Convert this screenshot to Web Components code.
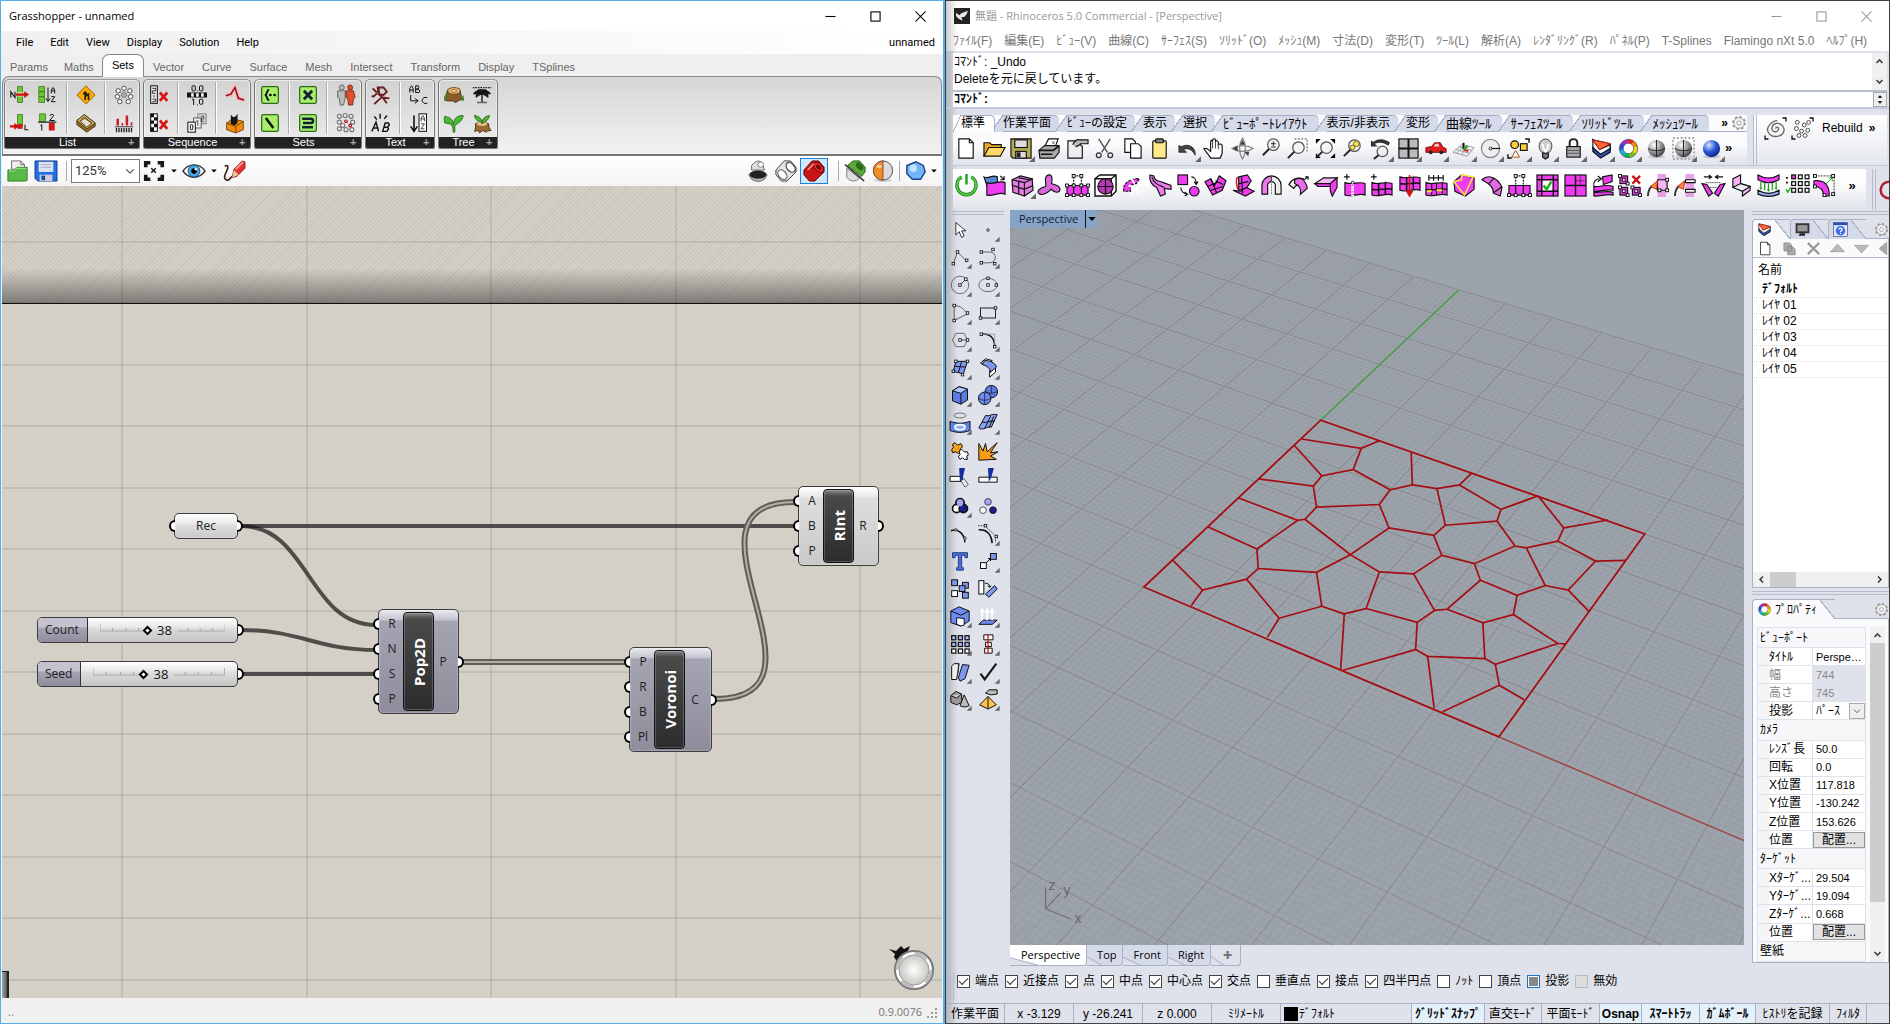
<!DOCTYPE html>
<html lang="ja">
<head>
<meta charset="utf-8">
<title>Grasshopper + Rhinoceros</title>
<style>
html,body{margin:0;height:100%}
body{font:12px/16px "Liberation Sans","Noto Sans CJK JP",sans-serif;color:#000;background:#333;overflow:hidden}
</style>
</head>
<body>
<work-desk></work-desk>
<script>
/* ---------- icon library, every icon lives in a 24 x 24 box ---------- */
const K='stroke="#111" stroke-width="1.2" ';
const N='fill="none" ';
const pk='fill="#f03cf0" '+K, lp='fill="#f9b4f6" '+K, bl='fill="#7f97ee" '+K;
const sq=(x,y,f='#fff')=>`<rect x="${x-1.5}" y="${y-1.5}" width="3" height="3" fill="${f}" stroke="#111"/>`;
const sqs=(...a)=>a.map(p=>sq(p[0],p[1])).join('');
const dot=(x,y)=>`<circle cx="${x}" cy="${y}" r="1.5" fill="#fff" stroke="#111"/>`;
const redX='<path d="M13 9l9 10M22 9l-9 10" stroke="#d81414" stroke-width="3.2"/>';
const setBox='<rect x="2" y="2" width="20" height="20" rx="2" fill="#a8ee6c" stroke="#2f6a14" stroke-width="1.5"/>';
const sphere=(id,a,b,c)=>`<defs><radialGradient id="${id}" cx=".35" cy=".3" r=".8"><stop offset="0" stop-color="${a}"/><stop offset=".5" stop-color="${b}"/><stop offset="1" stop-color="${c}"/></radialGradient></defs><ellipse cx="12" cy="20.5" rx="9" ry="2" fill="#0002"/><circle cx="12" cy="12" r="9" fill="url(#${id})"/>`;
const wheel=['#e22','#f80','#fd0','#7c0','#0b6','#0bd','#24e','#a2d'].map((c,i)=>`<circle cx="12" cy="12" r="7.5" fill="none" stroke="${c}" stroke-width="4" stroke-dasharray="6.2 41" transform="rotate(${i*45-100} 12 12)"/>`).join('')+`<circle cx="12" cy="12" r="9.5" ${N} stroke="#444" stroke-width=".8"/><circle cx="12" cy="12" r="5.5" fill="#fff" stroke="#444" stroke-width=".8"/>`;
const mag=(x,y)=>`<path d="M${x-4} ${y+4}l-7 7" stroke="#222" stroke-width="2"/><circle cx="${x}" cy="${y}" r="6" fill="#f4f4f4" stroke="#555" stroke-width="1.3"/>`;
const ribbonIcons={
 l1:`<rect x="9" y="2" width="6" height="19" fill="#6cc832" stroke="#2d6a10" stroke-width=".8"/><path d="M9 8h6v6H9z" fill="#b8e88c"/><path d="M1 15V8l5 7V8" ${N} stroke="#111" stroke-width="1.3"/><path d="M7 11.5h11" stroke="#d01010" stroke-width="2.5"/><path d="M17 7.5l6 4-6 4z" fill="#d01010"/>`,
 l2:`<rect x="1" y="2" width="7" height="19" fill="#6cc832" stroke="#2d6a10" stroke-width=".8"/><path d="M1 8h7M1 14h7" stroke="#2d6a10"/><path d="M12 3v16m-2.5-3l2.5 4 2.5-4" ${N} ${K}/><path d="M16 10V6l2-3 2 3v4m-4-3h4M16 14h4l-4 6h5" ${N} ${K}/>`,
 l3:`<path d="M12 1L23 12 12 23 1 12z" fill="#ffa800" stroke="#8a5800"/><path d="M11 18V8m0 6l4-3v7M11 8l-2 3m2-3l2 3" ${N} stroke="#222" stroke-width="2"/>`,
 l4:['12 4','5 7','19 7','4 14','20 14','7 20','17 20'].map(p=>{const [x,y]=p.split(' ');return `<path d="M12 12L${x} ${y}" stroke="#999"/><circle cx="${x}" cy="${y}" r="2.6" fill="#fff" stroke="#333"/>`}).join('')+'<circle cx="12" cy="12" r="3" fill="#aaa" stroke="#777"/>',
 l5:`<rect x="9" y="2" width="6" height="15" fill="#6cc832" stroke="#2d6a10" stroke-width=".8"/><rect x="9" y="13" width="6" height="6" fill="#d01818"/><path d="M0 16h6" stroke="#d01010" stroke-width="2.5"/><path d="M5 12l6 4-6 4z" fill="#d01010"/><path d="M18 14v6h4" ${N} stroke="#111" stroke-width="1.3"/>`,
 l6:`<rect x="2" y="1" width="7" height="9" fill="#6cc832" stroke="#2d6a10" stroke-width=".8"/><path d="M0 11h22" stroke="#222" stroke-width="1.5"/><rect x="13" y="12" width="7" height="9" fill="#d01818"/><path d="M3 15l1.5-1v7M14 3l3-1.5 2 1.5-5 6h6" ${N} ${K}/>`,
 l7:`<path d="M1 9l9-7 13 10v4l-10 7L1 14z" fill="#8a6a28" stroke="#40300c"/><path d="M1 9l9-7 13 10-10 7z" fill="#d6b464" stroke="#40300c"/><path d="M5 10l5-5 9 7-6 5z" fill="#e4e0d0" stroke="#40300c"/><path d="M5 10l5-4 9 6" ${N} stroke="#776030" stroke-width="1.5"/>`,
 l8:`<path d="M3 15V7h3v8m3 0v-3h2v3m3 0V3h3v12m3 0v-4h2v4z" fill="#c81e2c"/><path d="M1 16.5h22" stroke="#222"/><path d="M3 18v5m3-5v5m3-5v5m3-5v5m3-5v5m3-5v5m3-5v5" stroke="#222" stroke-width="1.6"/>`,
 q1:`<rect x="2" y="1" width="8" height="21" fill="#eee" ${K}/><path d="M4 4h4v3H4v3h4M6 12v3M4 17h4v3H4" ${N} stroke="#111"/>${redX}`,
 q2:`<rect x="0" y="9" width="24" height="6" fill="#111"/><path d="M5 10h3v4H5zm6 0h3v4h-3zm6 0h3v4h-3z" fill="#fff"/><rect x="6" y="1" width="4" height="6" rx="1" ${N} ${K}/><path d="M12 7h1" ${K}/><rect x="15" y="1" width="4" height="6" rx="1" ${N} ${K}/><path d="M6 18l2-1v7m4 0h1" ${N} ${K}/><rect x="15" y="17" width="4" height="6" rx="1" ${N} ${K}/>`,
 q3:`<path d="M1 13l6-2 5-8 4 13 7 2" ${N} stroke="#ffb4b4" stroke-width="5"/><path d="M1 13l6-2 5-8 4 13 7 2" ${N} stroke="#8e1020" stroke-width="1.8"/>`,
 q4:`<rect x="2" y="1" width="8" height="21" fill="#fff" ${K}/><path d="M2 1h4v4H2zm4 4h4v4H6zM2 9h4v4H2zm4 4h4v4H6zm-4 4h4v5H2z" fill="#111"/>${redX}`,
 q5:`<rect x="13" y="1" width="10" height="12" fill="#ccc" stroke="#777"/><rect x="8" y="6" width="9" height="12" fill="#eee" stroke="#444"/><rect x="1" y="11" width="9" height="12" fill="#fff" ${K}/><rect x="4" y="14" width="3" height="6" rx="1" ${N} ${K}/><path d="M11 10l2-1v6M17 4h3v3h-3v3h3" ${N} stroke="#333"/>`,
 q6:`<path d="M2 12l7-5 13 3v10l-9 4-11-4z" fill="#f08a10" stroke="#6a3600"/><path d="M2 12l11 4 9-6M13 16v8" ${N} stroke="#6a3600"/><path d="M7 13V2l3 3 3-1 2-3v11l-4 3z" fill="#171717"/>`,
 s1:`${setBox}<path d="M11 6c-4 0-1 5-5 6 4 1 1 6 5 6" ${N} stroke="#111" stroke-width="2.2"/><circle cx="12.5" cy="12" r="1.6"/><circle cx="17.500" cy="12" r="1.6"/>`,
 s2:`${setBox}<path d="M7 7l10 10m0-10L7 17" stroke="#123" stroke-width="3.4"/>`,
 s3:`<g fill="#bbb" stroke="#555"><circle cx="7" cy="3" r="3"/><path d="M2 7h9v9l-2 8H5l-1-8-2-1z"/></g><g fill="#e0502c" stroke="#702010"><circle cx="17" cy="3" r="3"/><path d="M12 7h9l2 8-2 1-1 8h-5l-1-8-2-1z"/></g>`,
 s4:`${setBox}<path d="M7 6l9 12" stroke="#111" stroke-width="3"/>`,
 s5:`${setBox}<path d="M5 7h10c4 0 4 5 0 5H6m0 0h9m3 5H5" ${N} stroke="#123" stroke-width="3"/>`,
 s6:[[4,4,0],[11,3,0],[18,4,0],[4,11,0],[20,11,0],[4,19,0],[12,20,0],[19,20,0],[8,15,0],[12,10,1],[17,15,1]].map(p=>`<circle cx="${p[0]}" cy="${p[1]}" r="${p[2]?1.6:2.4}" fill="#eee" stroke="${p[2]?'#b01020':'#777'}" stroke-width="1.4"/>`).join(''),
 t1:`<path d="M8 3l7 0 4 5-4 4-6-1zM9 2l1 10M7 10l-4 4-2-1m7-3l6 5 8 1m-8-2l-6 5-4 4M14 15l5 7M2 4l5 5" ${N} stroke="#6a1c20" stroke-width="2.2"/>`,
 t2:`<path d="M1 9V4l2-3 2 3v5M1 6h4M8 9V1h3l1 2-1 2H8h3l2 2-1 2zM2 12v7h8m-3-3l4 3-4 3M22 15h-4l-2 2v3l2 2h4" ${N} ${K}/>`,
 t3:`<path d="M1 22l5-11 3 11M3 18h6M14 22l3-10h4l1 2-2 3h-4 4l1 2-2 3zM7 8L4 4m7 3V1m5 6l3-4" ${N} stroke="#111" stroke-width="1.7"/>`,
 t4:`<path d="M6 3v17m-4-4l4 6 4-6" ${N} stroke="#111" stroke-width="1.9"/><rect x="12" y="1" width="9" height="21" fill="#fff" ${K}/><path d="M14.500 10V6l2-3 2 3v4m-4-3h4M14.500 13h4l-4 6h4" ${N} stroke="#222"/>`,
 e1:`<path d="M1 18c3-5 1-9 4-13l13-1c3 4 1 9 5 14-6-1-5 2-10 3-3-4-6 0-12-3z" fill="#8a5a28" stroke="#3c2408"/><ellipse cx="12" cy="7" rx="7.5" ry="4" fill="#e6be84" stroke="#6a4214"/><ellipse cx="12" cy="7" rx="4" ry="2" ${N} stroke="#a87030"/><path d="M1 13v6m22-6v6M3 10l-1 3" stroke="#3a9a20" stroke-width="1.8"/>`,
 e2:`<path d="M1 3h22" stroke="#222" stroke-width="1.5" stroke-dasharray="2 1"/><path d="M12 21V11M12 12C8 5 4 7 2 11m10 0C9 8 5 10 5 15m7-4c3-6 8-4 10 0m-10 0c4-4 7-2 7 4M8 6h8l4 3H4z" fill="#222" stroke="#111" stroke-width="1.6"/><path d="M6 21h12" stroke="#666" stroke-width="2"/>`,
 e3:`<path d="M11 23c0-9-2-10-10-11C0 8 0 6 1 4c6 1 10 4 10 10 1-8 5-11 12-11-1 7-6 9-10 12v8z" fill="#4cb834" stroke="#1c6410"/>`,
 e4:`<path d="M4 13c2-2 14-2 16 0 0 4 1 6 3 8-4 0-5 1-6 2l-4-2-4 3-1-3-5 1c1-3 2-5 1-9z" fill="#9a6a34" stroke="#3c2408"/><ellipse cx="12" cy="13" rx="6" ry="2.5" fill="#e6be84"/><path d="M12 13C12 6 8 4 3 3c1 6 4 7 9 8 1-5 4-7 9-8-1 5-4 8-9 9z" fill="#4cb834" stroke="#1c6410"/>`
};
const barIcons={
 gopen:`<path d="M5 10V1h10l4 4v6z" fill="#eee" stroke="#666"/><path d="M15 1v4h4" ${N} stroke="#666"/><path d="M1 11h7l3-3h11v14l-2 1H1z" fill="#58b848" stroke="#2a7a1c"/><path d="M2 12h6l3-3h10" ${N} stroke="#b4eaa4"/>`,
 gsave:`<path d="M0 1h24v22H3l-3-3z" fill="#2070e0" stroke="#0a3a8a"/><rect x="4" y="2" width="16" height="11" fill="#dde4ee"/><path d="M6 5h12M6 8h12" stroke="#aab"/><rect x="5" y="16" width="14" height="7" fill="#ccd"/><rect x="7" y="17" width="4" height="5" fill="#124a9a"/>`,
 fit:`<path d="M3 8V3h5m8 0h5v5m0 8v5h-5m-8 0H3v-5" ${N} stroke="#181818" stroke-width="4"/><path d="M9 9l5 5m0-5l-5 5" stroke="#111" stroke-width="1.5"/>`,
 eye:`<path d="M0 12C6 3 18 3 24 12 18 21 6 21 0 12z" fill="#fff" stroke="#333" stroke-width="1.5"/><circle cx="12" cy="12" r="6.5" fill="#4aa4e0" stroke="#1c4c78"/><circle cx="12" cy="12" r="3"/><circle cx="14" cy="10" r="1.3" fill="#fff"/>`,
 pencil:`<path d="M2 7c4-3 4 1 2 5s-4 8 0 10c4 1 3-3 7-5" ${N} stroke="#3a1a1a" stroke-width="1.7"/><path d="M10 19l2-9 9-9 3 1v7l-9 9z" fill="#e03434" stroke="#8a1c1c"/><path d="M10 19l2-8 5 5z" fill="#f0c894"/><path d="M14 10l8-8" ${N} stroke="#ff9c94" stroke-width="2"/>`,
 can1:`<path d="M5 11V6l4-4c4-2 7 0 8 2l2 7z" fill="#ddd" stroke="#666"/><ellipse cx="15" cy="5" rx="3" ry="3" fill="#fff" stroke="#777"/><path d="M2 16c4-5 16-5 20 0l-3 5c-5 3-9 3-14 0z" fill="#bbb" stroke="#555"/><ellipse cx="12" cy="16" rx="9" ry="4.500" fill="#222"/>`,
 can2:`<path d="M10 1h7l6 7v5L13 23H7l-6-7v-5z" fill="#e4e4e4" stroke="#333"/><ellipse cx="17" cy="8" rx="4" ry="6" transform="rotate(-40 17 8)" fill="#fff" stroke="#555" stroke-width="1.5"/><ellipse cx="8" cy="16" rx="4" ry="6" transform="rotate(-40 8 16)" fill="#fff" stroke="#777" stroke-width="1.5"/>`,
 can3:`<path d="M10 1h7l6 7v5L13 23H7l-6-7v-5z" fill="#c81414" stroke="#580404"/><ellipse cx="17" cy="8" rx="4" ry="6.500" transform="rotate(-42 17 8)" fill="#e23030" stroke="#700"/><ellipse cx="17" cy="8" rx="2" ry="3.5" transform="rotate(-42 17 8)" fill="#7a0808"/><path d="M5 11l7-7" stroke="#ff9a8a" stroke-width="1.500"/>`,
 can4:`<path d="M10 1h7l6 7v5l-4 5L4 6z" fill="#56ac34" stroke="#1c5410"/><ellipse cx="17" cy="7" rx="3" ry="5" transform="rotate(-42 17 7)" fill="#2c6a18"/><path d="M3 9l14 11c-5 4-10 4-14-1z" fill="#ddd" stroke="#777"/><path d="M1 5l21 18" stroke="#222" stroke-width="1.500"/>`,
 half:`<ellipse cx="12" cy="22" rx="10" ry="2" fill="#0002"/><circle cx="12" cy="11.5" r="10.500" fill="#ddd" stroke="#444"/><path d="M12 1a10.500 10.500 0 0 0 0 21z" fill="#f08c20" stroke="#844"/><ellipse cx="8" cy="7" rx="3" ry="2" fill="#fff8"/>`,
 oct:`<path d="M12 2l8 4 2 7-5 8H8l-6-6V6z" fill="#72b4f4" stroke="#1c3c8c" stroke-width="1.5"/><circle cx="9" cy="9" r="4" fill="#c4e2ff"/>`
};
const mainIcons={
 new:`<path d="M4 2h11l4 4v16H4z" fill="#fff" ${K}/><path d="M15 2v4h4" ${N} ${K}/>`,
 open:`<path d="M1 20V6h6l2 2h10v3" fill="#e8a820" ${K}/><path d="M1 20L6 11h17l-5 9z" fill="#ffd766" ${K}/>`,
 save:`<path d="M1 2h21v20H3l-2-2z" fill="#b8ae50" ${K}/><rect x="5" y="3" width="13" height="8" fill="#ddd" ${K}/><rect x="6" y="15" width="11" height="7" fill="#ddd" ${K}/><rect x="7" y="16" width="4" height="5" fill="#222"/>`,
 print:`<path d="M7 10l4-8h10l-3 8z" fill="#fff" ${K}/><path d="M1 14l6-5h15v7l-5 6H2z" fill="#aaa" ${K}/><path d="M1 14h15l6-5M3 18h12" ${N} stroke="#111" stroke-width="1.7"/><circle cx="16" cy="6" r="1.5" fill="#999"/>`,
 prop:`<path d="M2 4h9l6 6v12H2z" fill="#eee" ${K}/><path d="M7 8c2-4 5-6 8-5h8v4h-8l-2 2-3 1" fill="#bbb" ${K}/>`,
 cut:`<path d="M6 2l9 14M18 2L9 16" stroke="#555" stroke-width="1.5"/><circle cx="6" cy="19" r="2.5" ${N} stroke="#333" stroke-width="1.3"/><circle cx="18" cy="19" r="2.5" ${N} stroke="#333" stroke-width="1.3"/>`,
 copy:`<path d="M4 2h8l3 3v11H4z" fill="#fff" ${K}/><path d="M10 7h8l3 3v12H10z" fill="#fff" ${K}/>`,
 paste:`<rect x="5" y="4" width="14" height="18" rx="1" fill="#ffe98a" ${K}/><rect x="8" y="2" width="8" height="4" rx="1" fill="#888" ${K}/>`,
 undo:`<path d="M3 9v7h8l-3-3c4-2 9 0 12 6 1-8-7-13-14-9z" fill="#444" stroke="#222" stroke-width=".8"/>`,
 hand:`<path d="M8 22C6 18 3 16 1 12h3l4 3V5c0-2 2-2 2 0V3c1-2 3-1 3 0v2c1-2 3-1 3 1v2c1-1 4-1 4 1v8l-2 5z" fill="#fff" ${K}/><path d="M10 5v7m3-7v7m3-5v6" stroke="#444"/>`,
 orbit:`<path d="M12 1c-4 6-4 16 0 22 4-6 4-16 0-22zM1 12c6-4 16-4 22 0-6 4-16 4-22 0z" ${N} stroke="#888" stroke-width="1.2"/><path d="M9 8h6l-3-5zM7 9v6l-5-3zm7 7l4 4 1-5z" fill="#444"/>`,
 zoom:`${mag(15,8)}<path d="M12.500 7h5M15 4.500v5M12.500 10.500h5" stroke="#222"/>`,
 zwin:`<path d="M9 2h13v13" ${N} stroke="#444" stroke-dasharray="2 1.5"/>${mag(13,11)}`,
 zext:`<path d="M2 2h5L2 7zM22 2v5l-5-5zM2 22v-5l5 5zM22 22h-5l5-5z"/>${mag(13,11)}`,
 zsel:`${mag(14,9)}<circle cx="16" cy="7" r="3" fill="#ffe23c" stroke="#664"/><circle cx="12" cy="11" r="2.5" fill="#ffe23c" stroke="#664"/>`,
 uview:`<path d="M2 4v6h7l-3-3c5-2 10-1 14 2l2-3C17 2 10 1 5 5z" fill="#333"/><circle cx="14" cy="15" r="5.500" fill="#eee" stroke="#555" stroke-width="1.3"/><path d="M10 19l-5 4" stroke="#222" stroke-width="2"/>`,
 four:`<rect x="2" y="2" width="20" height="20" fill="#bbb" ${K}/><path d="M12 2v20M2 12h20" ${N} stroke="#111" stroke-width="2"/>`,
 car:`<path d="M2 15v-4l6-1 3-4h6l3 5 3 1v4H2z" fill="#e02020" stroke="#801010"/><path d="M10 10l2-3h3l1 3z" fill="#fcc"/><circle cx="7" cy="16" r="2" fill="#222"/><circle cx="18" cy="16" r="2" fill="#222"/>`,
 cplane:`<path d="M1 16l9-8 13 3-7 9zM4 13l14 4M7 10l14 4M5 17l8-9M10 18l7-8" ${N} stroke="#999"/><path d="M12 13V6" stroke="#111" stroke-width="2"/><path d="M12 13l5 2" stroke="#d02020" stroke-width="2"/><path d="M12 13l4-4" stroke="#20a020" stroke-width="2"/>`,
 circ:`<circle cx="12" cy="12" r="9.5" fill="#eee" stroke="#888" stroke-width="1.3"/><path d="M12 12h10" ${K}/>${dot(12,12)}`,
 shapes:`<circle cx="8" cy="8" r="4" fill="#ffcf30" ${K}/><rect x="14" y="7" width="7" height="7" fill="#ffcf30" ${K}/><path d="M9 14l4 7H5z" fill="#fff" stroke="#a50"/><path d="M1 18v4h4M19 2h4v4" ${N} stroke="#111" stroke-width="1.5"/>`,
 bulb:`<path d="M8 16C4 12 4 3 12 2c8 1 8 10 4 14z" fill="#ccc" stroke="#444"/><path d="M9 7c0 5 2 6 3 9 1-3 3-4 3-9" ${N} stroke="#fff" stroke-width="2"/><path d="M9 17h6v4l-3 2-3-2z" fill="#777" ${K}/>`,
 lock:`<path d="M8 10V6c0-5 8-5 8 0v4" ${N} stroke="#222" stroke-width="2"/><rect x="5" y="10" width="14" height="11" fill="#aaa" ${K}/><path d="M5 14h14M5 17h14" stroke="#555"/>`,
 layer:`<path d="M3 3l18 4v4l-11 5z" fill="#ef4422" ${K}/><path d="M3 3v9l7 8 11-6V8l-11 5z" fill="#f8f8f8" ${K}/><path d="M3 11v4l8 7 10-6v-4l-10 6z" fill="#2c50b8" ${K}/><path d="M3 3l7 10L21 7z" fill="#ff6a34" stroke="#b22"/>`,
 wheel,
 ball:sphere('ga','#fff','#999','#333')+`<path d="M3 12c5 3 13 3 18 0M12 3v18" ${N} stroke="#222"/>`,
 ball2:`<path d="M1 1h22v22H1z" ${N} stroke="#aaa" stroke-width="2" stroke-dasharray="2 2"/>`+sphere('gb','#fff','#999','#333')+`<path d="M3 12c5 3 13 3 18 0M12 3v18" ${N} stroke="#222"/>`,
 blue:sphere('gc','#d8e8ff','#2a58d8','#081c70'),
 spiral:`<path d="M12 12c1-3 5-1 3 2s-8 2-7-3 8-7 12-2 1 11-6 12-12-4-11-9S10 3 14 3" ${N} stroke="#666" stroke-width="1.5"/><path d="M0 20v4h4M20 0h4v4" ${N} stroke="#111" stroke-width="1.5"/>`,
 dots:[[6,5],[14,8],[19,5],[5,12],[11,15],[18,14],[8,20],[15,20]].map(p=>`<circle cx="${p[0]}" cy="${p[1]}" r="2.200" fill="#fff" stroke="#333"/>`).join('')+`<path d="M0 20v4h4M20 0h4v4" ${N} stroke="#111" stroke-width="1.5"/>`,
 gear:`<circle cx="12" cy="12" r="9" ${N} stroke="#999" stroke-width="3" stroke-dasharray="3.500 3.500"/><circle cx="12" cy="12" r="8" fill="#f0f0f0" stroke="#888"/><circle cx="12" cy="12" r="3" fill="#fff" stroke="#777"/>`
};
const grid3=(x,y,s)=>[0,1,2].map(i=>[0,1,2].map(j=>`<rect x="${x+i*s}" y="${y+j*s}" width="4" height="4" fill="${i+j?'#fff':'#f03cf0'}" stroke="#111" stroke-width="1.3"/>`).join('')).join('');
const tsIcons={
 p1:`<path d="M7 3a10 10 0 1 0 10 0" ${N} stroke="#1e8c1e" stroke-width="3.5"/><path d="M7 3a10 10 0 1 0 10 0" ${N} stroke="#5ccf4c" stroke-width="1.5"/><path d="M12 0v11" stroke="#1e9c1e" stroke-width="2.5"/>`,
 p2:`<path d="M1 3c5 3 8-3 14 0v9H4z" fill="#5888d0" ${K}/><path d="M4 9c6 3 13-3 19 0v12c-6-3-13 3-19 1z" ${pk}/><path d="M18 2l4 4m0-4v4h-4" ${N} ${K}/>`,
 p3:`<path d="M1 6l9-4 12 3 1 12-9 6-12-4z" fill="#e07ae0" ${K}/><path d="M1 6l13 3 9-4M14 9v14M8 4l12 2M2 12l12 4 9-4M8 8v13" ${N} ${K}/>`,
 p4:`<path d="M9 2c4-3 7 0 5 8 4 1 9 2 9 6s-6 4-9 0c-3 2-7 7-12 5s0-7 6-8c1-3-2-8 1-11z" fill="#d868d8" ${K}/>`,
 p5:`<path d="M8 2h8v10H8z" fill="#fff" ${K} stroke-dasharray="2 1"/><path d="M1 12h22v10H1z" ${pk}/><path d="M8 12v10m8-10v10" ${K}/>${sqs([8,2],[16,2],[1,12],[8,12],[16,12],[23,12],[1,22],[8,22],[16,22],[23,22])}`,
 p6:`<path d="M1 5h17v18H1zM1 5l5-4h17v17l-5 5M18 5l5-4" fill="#fff" stroke="#111" stroke-width="1.5"/><circle cx="12" cy="13" r="8" fill="#b838b8" ${K}/><path d="M4 13h16M12 5v16" ${K}/>`,
 p7:`<path d="M3 18C1 11 9 4 19 5l-3 5c-5 0-7 3-6 8z" ${pk} stroke-dasharray="3 1"/><path d="M8 12l5 2m-2 7l4-7m3 7l-1-6M11 5l3 5" stroke="#fff" stroke-width="2"/>`,
 p8:`<path d="M1 1l4 1c1 6 6 5 10 7l8 3v4l-7-1 1 6-5 2-4-9C4 12 0 8 1 1z" fill="#f07af0" ${K}/><path d="M3 3c2 8 9 9 13 11" ${N} ${K}/>`,
 p9:`<rect x="1" y="1" width="10" height="10" ${pk}/><circle cx="18" cy="18" r="5" ${pk}/><path d="M15 3c3 0 5 3 5 7m-2-2l2 3 2-3M4 14c0 4 3 7 7 7m-3-2l3 2-3 2" ${N} ${K}/>`,
 p10:`<path d="M1 8l6-3 4 7 5-10 7 5-4 10-10 5z" ${pk}/><path d="M7 5l6 14M20 13l-13 4M4 13l11-5m-3-1l8 4" ${N} ${K}/>`,
 p11:`<path d="M7 3l9-2 4 6-5 8-8 2z" ${pk}/><path d="M1 17l8 1 6-4 8 4-9 5z" ${pk}/><path d="M6 3c-3 4-1 8 0 13" ${N} stroke="#d01414" stroke-width="1.500"/><path d="M10 3l1 17M7 10l10-2" ${K}/>`,
 p12:`<path d="M2 21v-9a10 10 0 0 1 10-10v6a4 4 0 0 0-4 5v8z" fill="#ee7aee" ${K}/><path d="M22 21v-9A10 10 0 0 0 12 2v6a4 4 0 0 1 4 5v8z" fill="#eee" ${K}/><path d="M12 1v20" stroke="#777" stroke-dasharray="2 1"/>`,
 p13:`<path d="M2 11c3-6 9-8 15-6l-4 7c-3-1-4 0-6 3z" fill="#eee" ${K}/><path d="M8 6c3-2 7-2 9 0 3 4 4 6 4 9l-7 6c1-5-1-9-6-11z" fill="#ea6cea" ${K}/><path d="M18 6l4-3m-3 0h3v3" ${N} ${K}/>`,
 p14:`<path d="M0 10L9 4h14l-7 6z" ${lp}/><path d="M16 10l7-6v10l-5 9-2-5z" ${pk}/><path d="M0 10h16v3H3z" ${pk}/>`,
 p15:`<path d="M2 9c6 3 15-2 21 1v12c-6-3-15 3-21 0z" ${pk}/><path d="M10 10v13" stroke="#fff" stroke-width="3" stroke-dasharray="2 1"/><path d="M1 3h6M4 0v6" ${K}/>${dot(10,9)}`,
 p16:`<path d="M2 9c6 3 15-2 21 1v12c-6-3-15 3-21 0z" ${pk}/><path d="M9 10v13m7-15v13M2 16c6 2 15-2 21 0" ${N} stroke="#111" stroke-width="1.600"/><path d="M1 3h6M4 0v6" ${K}/>`,
 p17:`<path d="M2 3c6 3 15-2 21 1v13c-6-3-15 3-21 0z" ${pk}/><path d="M9 4v13m7-14v13M2 10c6 2 15-2 21 0" ${N} stroke="#111" stroke-width="1.600"/><path d="M12 1v18m-3-1l3 5 3-5z" fill="#d01414" stroke="#d01414" stroke-width="1.500"/>`,
 p18:`<path d="M1 9c6 3 16-2 22 1v12c-6-3-16 3-22 0z" ${pk}/><path d="M7 10v12m5-13v13m6-14v12M1 16c6 2 16-2 22 0" ${N} ${K}/><path d="M4 4h15M4 1v6m5-6v6m5-6v6m5-6v6" ${K}/><path d="M2 18h5m5-1h6" stroke="#fd4" stroke-width="2"/>`,
 p19:`<path d="M1 8l8-7 13 3v12l-9 7-11-5z" ${pk}/><path d="M1 8l11 14L21 3 9 1v5z" ${N} stroke="#ffe24a" stroke-width="1.600"/>`,
 p20:`<path d="M1 6c6-6 16-3 21 8l-2 9-7-3C13 13 8 10 1 6z" fill="#e468e4" ${K}/><path d="M8 10l6-6M14 19l8-6" ${K}/>`,
 p21:`<path d="M8 2h8v10H8z" fill="#fff" ${K} stroke-dasharray="2 1"/><path d="M1 12h22v10H1z" ${pk}/><path d="M8 12v10m8-10v10" ${K}/>${sqs([8,2],[16,2],[1,22],[8,22],[16,22],[23,22])}`,
 p22:`<rect x="1" y="1" width="22" height="22" ${pk} /><path d="M6 1v22M18 1v22M1 6h22M1 18h22" stroke="#111" stroke-width="1.500"/><rect x="7" y="7" width="10" height="10" fill="#fff"/><path d="M8 12l3 4 5-8" ${N} stroke="#19b019" stroke-width="2.5"/>`,
 p23:`<rect x="1" y="1" width="22" height="22" ${pk}/><path d="M12 1v22M1 12h22" stroke="#111" stroke-width="1.500"/><path d="M12 7h11M17 1v11" stroke="#111" stroke-dasharray="1 1"/>`,
 p24:`<path d="M12 3l10-2v7l-9 3zM3 13c6 1 13-3 20 0v4c-7-2-14 2-20 1zM3 19c6 1 13-2 20 0v3c-7-2-14 2-20 1z" ${pk}/><path d="M3 13C2 8 5 5 9 5M7 2l4 3-4 3" ${N} ${K}/>`,
 p25:`${[[1,2],[1,14],[14,14]].map(p=>`<rect x="${p[0]}" y="${p[1]}" width="8" height="8" ${pk}/>`+sqs([p[0]+4,p[1]+4],[p[0],p[1]],[p[0]+8,p[1]+8])).join('')}<path d="M14 2l8 8m0-8l-8 8" stroke="#c81414" stroke-width="2.5"/>`,
 p26:`<path d="M11 0h9v24h-9z" fill="#e6a0e6"/><path d="M11 6h10v11H11z" ${lp}/><path d="M1 23c0-6 2-9 5-11" ${N} stroke="#333" stroke-width="2"/><path d="M4 13l7-6-1 9z" fill="#f84" stroke="#c20"/>${sqs([21,6],[21,17],[13,17])}`,
 p27:`<path d="M12 0h9v24h-9z" fill="#e6a0e6"/><path d="M12 6h10v3H12zM12 16h10v3H12z" fill="#fff" ${K}/><path d="M1 23c0-6 2-9 5-11" ${N} stroke="#333" stroke-width="2"/><path d="M4 13l7-6-1 9z" fill="#f84" stroke="#c20"/>`,
 p28:`<path d="M0 10l5 1 6 9-4 3zM24 10l-5 1-6 9 4 3z" ${pk}/><path d="M2 3h8M7 1l3 2-3 2M22 3h-8m3-2l-3 2 3 2" ${N} ${K}/><path d="M4 9h16M8 14h8" stroke="#111" stroke-dasharray="1 1"/>`,
 p29:`<path d="M3 5l8-4v9l10 3v4l-8 6v-7L3 13z" ${lp}/><path d="M3 14l8-4 10 3-8 5z" fill="#eee" ${K}/>`,
 p30:`<path d="M1 1c7 4 15 4 22 0v5c-7 4-15 4-22 0z" ${pk}/><path d="M1 17c7 4 15 4 22 0v4c-7 3-15 3-22 0z" fill="#98a8f4" ${K}/><path d="M4 8v8m4-7v8m4-7v8m4-9v8m4-9v8" stroke="#25a025" stroke-width="1.300"/><path d="M3 14l1 2 1-2m6 2l1 2 1-2m6-2l1 2 1-2" ${N} stroke="#25a025"/>`,
 p31:`${grid3(7,1,7)}<path d="M1 16l2 3 3-5" ${N} stroke="#19b019" stroke-width="1.500"/><path d="M2 3v8" stroke="#111" stroke-width="2" stroke-dasharray="2 3"/>`,
 p32:`<path d="M1 7c12-1 16 5 16 16h-6c0-7-4-10-10-10z" ${pk}/><path d="M2 2h20v20" ${N} stroke="#333" stroke-dasharray="2 1"/><path d="M13 11l7-7m-4 0h4v4" ${N} stroke="#1a1"/>${sqs([2,2],[21,2],[21,21],[2,13],[12,22])}`,
 cut1:`<circle cx="12" cy="12" r="10" ${N} stroke="#b02030" stroke-width="3"/>`
};
const sideIcons={
 a1:`<path d="M7 3v15l4-4 3 7 3-2-3-6h5z" fill="#fff" stroke="#111"/>`,
 a2:dot(12,12),
 a3:`<path d="M4 20L9 6l10 10" ${N} stroke="#444"/>${sqs([4,20],[9,6],[20,16])}`,
 a4:`<path d="M4 6h10c9 0 9 13 0 13H4" ${N} stroke="#444"/>${sqs([4,6],[18,3],[4,19],[20,20])}`,
 a5:`<circle cx="12" cy="12" r="10.5" ${N} stroke="#555"/><path d="M12 12l7-7" stroke="#333"/>${sqs([12,12],[19,5])}`,
 a6:`<ellipse cx="12" cy="12" rx="11" ry="8" ${N} stroke="#555"/>${sqs([12,12],[12,4],[22,12])}`,
 a7:`<path d="M5 3v18M5 3c8 0 12 5 16 10L5 21" ${N} stroke="#444"/>${sqs([5,3],[21,12],[5,21])}`,
 a8:`<rect x="3" y="6" width="18" height="12" ${N} stroke="#222" stroke-width="1.2"/>${sqs([3,18],[21,6])}`,
 a9:`<path d="M3 12l4-8h10l4 8-4 8H7z" ${N} stroke="#555"/><path d="M12 12h9" stroke="#333"/>${sqs([12,12],[21,12])}`,
 a10:`<path d="M4 5c11-1 16 5 16 15" ${N} stroke="#111" stroke-width="1.8"/><path d="M6 5h14v13" ${N} stroke="#999"/>${sqs([4,5],[20,20])}`,
 a11:`<path d="M7 4h14l-5 15-12-3z" ${bl}/><path d="M14 4l-4 14M6 10l13 1" ${K}/>${sqs([7,4],[21,4],[15,20],[4,16])}`,
 a12:`<path d="M3 6l6-5 8 2-4 6zM14 23v-8l7-6v8z" fill="#fff" ${K}/><path d="M8 3c9 0 14 5 14 8l-7 6c0-4-4-8-10-9z" ${bl}/>`,
 a13:`<path d="M3 7l8-5 10 3v13l-8 5-10-4z" fill="#5c7ae4" ${K}/><path d="M3 7l8-5 10 3-8 5z" fill="#b4c4fc" ${K}/><path d="M13 10v13" ${K}/>`,
 a14:`<circle cx="16" cy="8" r="7.5" fill="#5c7ae4" ${K}/><circle cx="8" cy="16" r="7.5" fill="#6c8af0" ${K}/><path d="M1 16c4 3 10 3 14 0M8 9v14M9 8c4 3 9 2 14 0M16 1v9" ${N} stroke="#223"/>`,
 a15:`<ellipse cx="12" cy="3" rx="7" ry="3" ${N} stroke="#555"/><path d="M0 10c8 3 16 3 24 0v11c-8 3-16 3-24 0z" fill="#5c86e8" ${K}/><ellipse cx="12" cy="17" rx="6" ry="3" fill="#8ab0f8" stroke="#fff" stroke-width="2"/>`,
 a16:`<path d="M1 18L9 3c4 2 8-3 14-1l-7 15c-5-2-10 5-15 1zM5 11c5 2 10-3 15-1M8 19l7-15M13 18l6-14" fill="#8aa4f4" ${K}/>`,
 a17:`<path d="M3 4l3-2 3 3 4-2 2 4-3 3 2 3-4 2-3-2-4 1-1-4 2-2z" fill="#f7a01c" ${K}/><path d="M11 12l3-2 3 3 4 0 1 4-2 1 1 4-4 0-2-2-3 2-2-3 2-3z" fill="#fff" ${K}/>`,
 a18:`<path d="M1 23V3l5 9 3-9 2 10L23 2l-8 12 9-1-9 5 7 4z" fill="#f99c1a" ${K}/>`,
 a19:`<path d="M0 10h15v6H0z" fill="#fff" ${K}/><path d="M13 15l4-2 5 7-4 3z" fill="#eee" stroke="#444"/><path d="M11 0h7l-3 13-3 4z" fill="#142c9c"/>`,
 a20:`<path d="M1 11h22v6H1z" fill="#fff" ${K}/><path d="M12 0h7l-3 11-3 6z" fill="#142c9c"/>`,
 a21:`<circle cx="12" cy="8" r="5" fill="#a4a4f4" stroke="#111" stroke-width="2"/><circle cx="8" cy="15" r="5" fill="#fff" stroke="#111" stroke-width="2"/><circle cx="16" cy="15" r="5" fill="#1c1c8c" stroke="#111" stroke-width="2"/><circle cx="12" cy="9" r="3.5" fill="#a4a4f4"/>`,
 a22:`<circle cx="12" cy="7" r="4" fill="#a4a4f4" stroke="#333"/><circle cx="6" cy="17" r="4" fill="#fff" stroke="#333"/><circle cx="18" cy="17" r="4" fill="#1c1c8c" stroke="#111"/>`,
 a23:`<path d="M1 8c9-3 16 4 17 14" ${N} stroke="#111" stroke-width="1.8"/>${dot(7,7)}${dot(18,17)}`,
 a24:`<path d="M1 7c9-1 15 5 16 16" ${N} stroke="#111" stroke-width="2"/><path d="M0 2h8l13 12v8" ${N} stroke="#333" stroke-dasharray="2 1"/>${sqs([9,2],[22,15])}`,
 a25:`<path d="M3 2h18v6h-3l-1-3h-3v14l2 1v3H8v-3l2-1V5H7L6 8H3z" fill="#4c6cdc" stroke="#142c70"/>`,
 a26:`<rect x="3" y="14" width="7" height="7" fill="#fff" ${K}/><rect x="15" y="3" width="7" height="7" ${bl}/><path d="M10 14l5-5m-3 0h3v3" ${N} ${K}/>`,
 a27:`<rect x="2" y="1" width="7" height="7" ${bl}/><rect x="15" y="4" width="7" height="7" ${bl}/><rect x="11" y="8" width="7" height="7" ${bl}/><rect x="2" y="14" width="7" height="7" fill="#fff" ${K}/><rect x="15" y="16" width="7" height="7" ${bl}/>`,
 a28:`<rect x="1" y="2" width="6" height="16" fill="#fff" ${K}/><path d="M9 18L20 8l3 4-10 10z" ${bl}/><path d="M8 5c4 0 6 1 6 5m-2-2l2 2 2-2" ${N} ${K}/>`,
 a29:`<path d="M1 6l10-5 12 5v12l-10 6-12-4z" fill="#6c8af0" ${K}/><path d="M1 6l12 5 10-5" ${N} ${K}/><path d="M8 14l9 1v8l-4 1-5-2z" fill="#fff" ${K}/>`,
 a30:`<path d="M1 22l5-5h17l-6 5z" fill="#6c8af0" ${K}/><path d="M5 17V5m6 12V5m6 12V5M3 8l2-4 2 4m2 0l2-4 2 4m2 0l2-4 2 4" ${N} stroke="#fff" stroke-width="2"/>`,
 a31:[0,1,2].map(i=>[0,1,2].map(j=>`<rect x="${2+i*8}" y="${2+j*8}" width="5" height="5" fill="${j<2?'#a4b4fc':'#fff'}" stroke="#111" stroke-width="1.500"/>`).join('')).join(''),
 a32:`<path d="M7 1h11v6H7zM9 10h7v5H9zM8 17h9v6H8z" fill="#fff" ${K}/><path d="M12 0v24" stroke="#d01414" stroke-width="1.600"/>`,
 a33:`<path d="M2 5l3-3h6l-3 19H2z" fill="#eee" ${K}/><path d="M10 19L15 3l8 1-5 16-6 3z" ${bl}/><path d="M10 1v12" stroke="#333"/>`,
 a34:`<path d="M3 14l5 7L22 2" ${N} stroke="#181818" stroke-width="2.600"/>`,
 a35:`<path d="M1 8l6-5 7 3v10l-6 3-7-3z" fill="#999" ${K}/><path d="M1 8l7 3 6-5" fill="#ccc" ${K}/><path d="M17 7l6 13c-3 2-8 2-11 0z" fill="#bbb" ${K}/>`,
 a36:`<path d="M9 5l4-4h10v5l-7 1z" fill="#bbb" ${K}/><path d="M12 9l10 10-10 5-10-5z" fill="#ffc44c" ${K}/><path d="M12 9v15" ${K}/>`,
 mon:`<rect x="1" y="2" width="22" height="16" fill="#333"/><rect x="4" y="5" width="16" height="10" fill="#999"/><path d="M8 18h8v4H6v-1z" fill="#222"/>`,
 help:`<rect x="1" y="1" width="22" height="22" fill="#dce6ff" stroke="#446"/><path d="M1 1h22v4H1z" fill="#2c50b8"/><circle cx="12" cy="14" r="7.5" fill="#3c6ce0"/><path d="M9.500 12c0-3 5-3 5 0 0 2-2.500 2-2.500 4m0 1v2" ${N} stroke="#fff" stroke-width="2"/>`,
 dup:`<path d="M3 3h9l3 3v10H3zM9 9h8l4 4v9H9z" fill="#aaa" stroke="#777"/>`,
 del:`<path d="M3 3l18 18M21 3L3 21" stroke="#999" stroke-width="3.5"/>`,
 up:`<path d="M12 5l11 12H1z" fill="#bbb" stroke="#888"/>`,
 down:`<path d="M12 19L1 7h22z" fill="#bbb" stroke="#888"/>`,
 left:`<path d="M14 2v20L2 12z" fill="#aaa" stroke="#888"/>`,
 rhino:`<rect width="24" height="24" fill="#222"/><path d="M3 7l5 4 3-3 10-4-2 5-3 4-5 1 2 5-6-3-4-4z" fill="#e8e8e8"/>`,
 chev:`<path d="M3 8l9 9 9-9" ${N} stroke="#444" stroke-width="2.600"/>`,
 chevu:`<path d="M4 16l8-8 8 8" ${N} stroke="#444" stroke-width="4.500"/>`,
 chevd:`<path d="M4 8l8 8 8-8" ${N} stroke="#444" stroke-width="4.500"/>`,
 chevl:`<path d="M16 4l-8 8 8 8" ${N} stroke="#333" stroke-width="4"/>`,
 chevr:`<path d="M8 4l8 8-8 8" ${N} stroke="#333" stroke-width="4"/>`,
 tri:`<path d="M1 6h22L12 18z"/>`,
 min:`<path d="M1 12h22" stroke="currentColor" stroke-width="2.400"/>`,
 max:`<rect x="2" y="2" width="20" height="20" ${N} stroke="currentColor" stroke-width="2.400"/>`,
 close:`<path d="M1 1l22 22M23 1L1 23" stroke="currentColor" stroke-width="2.200"/>`
};
const ICONS={...ribbonIcons,...barIcons,...mainIcons,...tsIcons,...sideIcons};

/* ---------- helpers ---------- */
const BASE=`*,*::before,*::after{box-sizing:border-box}
button,input,select{font:inherit;color:inherit;margin:0;border:0;padding:0;background:none;border-radius:0}
a{color:inherit;text-decoration:none}
ui-icon{width:20px;height:20px}`;
function el(name,css,html){
  customElements.define(name,class extends HTMLElement{
    connectedCallback(){
      if(this.shadowRoot)return;
      const t=document.createElement('template');
      t.innerHTML=`<style>${BASE}${css}</style>${typeof html==='function'?html(this):html}`;
      this.attachShadow({mode:'open'}).append(t.content.cloneNode(true));
    }
  });
}
const at=(h,n,d='')=>h.getAttribute(n)??d;

el('ui-icon',`:host{display:block;flex:none}svg{display:block;width:100%;height:100%;overflow:visible}`,
 h=>`<svg viewBox="0 0 24 24" aria-hidden="true">${ICONS[at(h,'name')]||''}${h.hasAttribute('flyout')?'<path d="M26 20v6h-6z" fill="#666"/>':''}</svg>`);

el('window-title',`:host{display:flex;align-items:center;height:30px;padding-left:8px;font:11px/16px "Open Sans","Noto Sans CJK JP",sans-serif}
 ui-icon{width:16px;height:16px;margin-right:5px}.t{flex:1;white-space:nowrap}button{width:45px;height:28px;display:grid;place-items:center}button ui-icon{width:11px;height:11px;margin:0}`,
 h=>`${h.hasAttribute('icon')?`<ui-icon name="${at(h,'icon')}"></ui-icon>`:''}<span class="t"><slot></slot></span>
 <button aria-label="Minimize"><ui-icon name="min"></ui-icon></button><button aria-label="Maximize"><ui-icon name="max"></ui-icon></button><button aria-label="Close"><ui-icon name="close"></ui-icon></button>`);

el('menu-bar',`:host{display:flex;align-items:center;white-space:nowrap}nav{display:flex;gap:var(--gap,20px)}.end{margin-left:auto}`,
 h=>`<nav>${at(h,'items').split('|').map(t=>`<a href="#">${t}</a>`).join('')}</nav><span class="end"><slot></slot></span>`);

el('tool-strip',`:host{display:flex;align-items:center}button{flex:1 1 0;min-width:0;display:grid;place-items:center}ui-icon{width:var(--icon,23px);height:var(--icon,23px)}`,
 h=>at(h,'icons').split(' ').map(n=>{const f=n.endsWith('*'),k=n.replace('*','');return `<button aria-label="${k}"><ui-icon name="${k}"${f?' flyout':''}></ui-icon></button>`}).join(''));

/* ---------- Grasshopper ---------- */
el('ribbon-group',`:host{display:flex;flex-direction:column;height:70px;border:1px solid #777;border-top-color:#999;border-radius:5px 5px 2px 2px;background:linear-gradient(#d2d2d2,#ededed);box-shadow:inset 0 0 0 1px #fff8;overflow:hidden;flex:none}
 .c{flex:1;display:flex;justify-content:center;padding:1px 1px 0}.col{display:flex;flex-direction:column}.col button{width:28px;height:28px;display:grid;place-items:center}
 .sep{width:10px;background:linear-gradient(90deg,#0000 4px,#aaa 4px,#aaa 5px,#fff 5px,#fff 6px,#0000 6px);margin:1px 0 3px}
 footer{height:12px;background:#222;color:#fff;font-size:11px;line-height:11px;display:flex;padding:0 2px}footer span{flex:1;text-align:center}footer i{font-style:normal;color:#aaa;width:9px;font-weight:bold}`,
 h=>`<div class="c">${at(h,'cols').split(' ').map(c=>c==='|'?'<div class="sep"></div>':`<div class="col">${c.split(',').map(n=>`<button aria-label="${n}"><ui-icon name="${n}"></ui-icon></button>`).join('')}</div>`).join('')}</div>
 <footer><span><slot></slot></span><i>+</i></footer>`);

el('gh-ribbon',`:host{display:block;background:#efefef}
 .tabs{display:flex;height:23px;padding:0;font-size:11px;color:#666}
 .tabs button{padding:2px 8px 0;height:23px}.tabs button.on{color:#000;background:#fff;border:1px solid #888;border-bottom:0;border-radius:7px 7px 0 0;padding:0 9px 2px}.tabs .on~button{padding:2px 9px 0}
 .body{display:flex;gap:3px;height:78px;padding:2px 1px 0;border:1px solid #8a8a8a;border-width:1px 1px 0;border-radius:7px 7px 0 0;background:linear-gradient(#d6d6d6,#f2f2f2);margin-top:-1px}
 `,
 `<div class="tabs">${'Params|Maths|Sets|Vector|Curve|Surface|Mesh|Intersect|Transform|Display|TSplines'.split('|').map(t=>`<button${t==='Sets'?' class="on"':''}>${t}</button>`).join('')}</div>
 <div class="body"><ribbon-group cols="l1,l5 l2,l6 | l3,l7 | l4,l8">List</ribbon-group><ribbon-group cols="q1,q4 | q2,q5 | q3,q6">Sequence</ribbon-group><ribbon-group cols="s1,s4 | s2,s5 | s3,s6">Sets</ribbon-group><ribbon-group cols="t1,t3 | t2,t4">Text</ribbon-group><ribbon-group cols="e1,e3 e2,e4">Tree</ribbon-group></div>`);

el('gh-toolbar',`:host{display:flex;align-items:center;height:32px;border-top:2px solid #777;background:linear-gradient(#fff,#f4f4f4);padding:0 4px 0 2px}
 button{display:grid;place-items:center;height:26px;width:28px;flex:none}button.n{width:12px}button.n:last-child{width:8px}.n ui-icon{width:6px;height:6px}button ui-icon{width:22px;height:22px}
 .sep{width:1px;height:20px;background:#aaa;margin:0 2px}.s1{margin:0 4px 0 6px}.sp{flex:1}.on{background:#cfe6fb;border:1px solid #1c82dc;margin-right:8px}
 .zoom{display:grid;width:69px;height:24px;border:1px solid #777;background:#fff;align-items:center;font:13px/18px Roboto,sans-serif;color:#333}.zoom select,.zoom ui-icon{grid-area:1/1}.zoom select{appearance:none;padding-left:3px;height:22px;width:100%}.zoom ui-icon{justify-self:end;width:10px;height:10px;margin-right:4px;pointer-events:none}`,
 `<button aria-label="Open"><ui-icon name="gopen"></ui-icon></button><button aria-label="Save"><ui-icon name="gsave"></ui-icon></button><i class="sep s1"></i>
 <label class="zoom"><select aria-label="Zoom"><option>125%</option></select><ui-icon name="chev"></ui-icon></label>
 <button aria-label="Zoom extents"><ui-icon name="fit"></ui-icon></button><button class="n" aria-label="More"><ui-icon name="tri"></ui-icon></button>
 <button aria-label="Preview"><ui-icon name="eye"></ui-icon></button><button class="n" aria-label="More"><ui-icon name="tri"></ui-icon></button><button aria-label="Sketch"><ui-icon name="pencil"></ui-icon></button>
 <span class="sp"></span><button aria-label="No preview"><ui-icon name="can1"></ui-icon></button><button aria-label="Wireframe"><ui-icon name="can2"></ui-icon></button><button class="on" aria-label="Shaded"><ui-icon name="can3"></ui-icon></button><i class="sep"></i>
 <button aria-label="Selected only"><ui-icon name="can4"></ui-icon></button><button aria-label="Document"><ui-icon name="half"></ui-icon></button><i class="sep"></i><button aria-label="Mesh quality"><ui-icon name="oct"></ui-icon></button><button class="n" aria-label="More"><ui-icon name="tri"></ui-icon></button>`);

el('gh-node',`:host{position:absolute;box-sizing:border-box;display:flex;border:1px solid #3c3c3c;border-radius:5px;font:12px/16px "Open Sans",sans-serif;color:#222;
 background:linear-gradient(#e9e9ef,#c4c3cf 10px,#a5a4b3 11px,#8f8d9c);box-shadow:inset 0 0 0 1px #fff3}
 :host([plain]){background:linear-gradient(#fff,#e8e8e8 10px,#dedede 11px,#c9c9c9)}
 .side{flex:1;display:flex;flex-direction:column;justify-content:center}.side div{height:25px;display:flex;align-items:center;justify-content:center;position:relative}.side.in{flex:0 0 24px;padding-left:2px}.side.in div::before{margin-left:-2px}.side.out div{padding-right:6px}
 .in div::before,.out div::after{content:"";position:absolute;width:6px;height:12px;background:#fff;border:2px solid #000}
 .in div::before{left:-6px;border-right:0;border-radius:7px 0 0 7px}.out div::after{right:-6px;border-left:0;border-radius:0 7px 7px 0}
 .core{width:31px;margin:2px 0;border:1px solid #111;border-radius:4px;background:linear-gradient(#888,#4a4a4a 6px,#2c2c2c);box-shadow:inset 0 0 0 1px #fff3;color:#fff;display:grid;place-items:center;font:bold 15px/20px "Open Sans",sans-serif}
 .core span{writing-mode:vertical-rl;transform:rotate(180deg)}
 .bare{flex:1;display:flex;align-items:center;justify-content:space-between}.bare .side.in,.bare .side.out{flex:0 0 0px;padding:0}.bare .side div{width:0;padding:0!important}.bare .side.in div::before{margin:0}`,
 h=>{const s=(n,c)=>`<div class="side ${c}">${at(h,n).split(',').map(t=>`<div>${t}</div>`).join('')}</div>`;
  return at(h,'in')?`${s('in','in')}<div class="core"><span><slot></slot></span></div>${s('out','out')}`
   :`<div class="bare"><div class="side in"><div></div></div><span><slot></slot></span><div class="side out"><div></div></div></div>`});

el('gh-slider',`:host{position:absolute;box-sizing:border-box;display:flex;width:201px;height:26px;border:1px solid #3c3c3c;border-radius:5px;font:12px/16px "Open Sans",sans-serif;background:linear-gradient(#fff,#e8e8e8 9px,#dedede 10px,#c4c4c4)}
 label{padding:0 8px 0 7px;display:flex;align-items:center;border-right:1px solid #333;border-radius:4px 0 0 4px;background:linear-gradient(#c4c3cf 9px,#a5a4b3 10px,#8f8d9c);color:#222}
 .t{flex:1;display:grid;align-items:center;margin:0 8px}.t>*{grid-area:1/1}
 svg{width:calc(100% - 8px);height:8px;margin:0 4px 5px;display:block}
 input{appearance:none;width:100%;height:16px;background:none}input::-webkit-slider-thumb{appearance:none;width:7px;height:7px;background:#fff;border:2px solid #000;transform:rotate(45deg)}
 output{padding-left:46%;font-size:13px;color:#111}
 .p{position:absolute;right:-7px;top:6px;width:6px;height:12px;background:#fff;border:2px solid #000;border-left:0;border-radius:0 7px 7px 0}`,
 h=>`<label for="r"><slot></slot></label><div class="t"><svg viewBox="0 0 120 8" preserveAspectRatio="none"><path d="M0 0v7M12 4v3M25 4v3M37 4v3M84 4v3M96 4v3M108 4v3M120 0v7M0 7h42M74 7h46" fill="none" stroke="#aaa" stroke-width="1" vector-effect="non-scaling-stroke"/></svg>
 <input id="r" type="range" min="0" max="100" value="38"><output for="r">38</output></div><i class="p"></i>`);

const wire=(x,y,X,Y,a,d)=>{const p=`M${x} ${y}C${x+a} ${y} ${X-a} ${Y} ${X} ${Y}`;
 return d?`<path d="${p}" stroke="#5f5d58" stroke-width="6"/><path d="${p}" stroke="#b4b0a8" stroke-width="2"/>`:`<path d="${p}" stroke="#1b1a18b8" stroke-width="4"/>`};
el('gh-canvas',`:host{display:block;position:relative;overflow:hidden;background:#d4d0c8;flex:1;min-height:0}
 .bg{position:absolute;inset:0;width:100%;height:100%}.out{position:absolute;inset:0 0 auto 0;height:118px;border-bottom:1px solid #111;background:linear-gradient(#0000 82px,#0006),repeating-linear-gradient(135deg,#b9b4ab66 0 1px,#0000 1px 3px)}
 .compass{position:absolute;right:1px;bottom:0;width:56px;height:56px}.w{position:absolute;left:0;bottom:0;width:7px;height:27px;border:2px solid #222;border-width:1px 2px 0 0;background:linear-gradient(90deg,#aaa,#555)}`,
 ()=>{let g='';for(let i=0;i<12;i++)g+=`<path d="M${Math.round(120+i*184.5)} 0v2000"/>`;for(let i=0;i<24;i++)g+=`<path d="M0 ${Math.round(55.5+i*61.5)}h3000"/>`;
 return `<svg class="bg" aria-hidden="true"><g stroke="#00000016" stroke-width="2">${g}</g></svg><div class="out"></div>
 <svg class="bg" fill="none" aria-hidden="true">${wire(239,340,792,340,80)}${wire(239,340,374,439,68)}${wire(239,444,374,464,60)}${wire(239,488,374,488,60)}${wire(460,476,624,476,60,1)}${wire(713,513,793,316,132,1)}</svg>
 <gh-node plain style="left:172px;top:327px;width:64px;height:26px">Rec</gh-node>
 <gh-slider style="left:35px;top:431px">Count</gh-slider><gh-slider style="left:35px;top:475px">Seed</gh-slider>
 <gh-node in="R,N,S,P" out="P" style="left:376px;top:423px;width:81px;height:105px">Pop2D</gh-node>
 <gh-node in="P,R,B,Pl" out="C" style="left:627px;top:461px;width:83px;height:105px">Voronoi</gh-node>
 <gh-node plain in="A,B,P" out="R" style="left:796px;top:300px;width:81px;height:80px">RInt</gh-node>
 <div class="w"></div>
 <svg class="compass" viewBox="0 0 56 56"><path d="M4 7l7 2 5-5 3 3 6-3-2 5-8 6-2 6-4-6 1-3z" fill="#111"/><defs><radialGradient id="c"><stop offset="0" stop-color="#fff"/><stop offset="1" stop-color="#c9c7c2"/></radialGradient></defs><circle cx="29" cy="28" r="19" fill="#fff" stroke="#777" stroke-width="2"/><circle cx="29" cy="28" r="15" fill="url(#c)" stroke="#999" stroke-width="1"/><circle cx="29" cy="28" r="17" fill="none" stroke="#bbb" stroke-width="3" stroke-dasharray="14 12.700"/></svg>`});

el('gh-window',`:host{display:flex;flex-direction:column;border:1px solid #54aeea;border-right-width:2px;background:#fff;min-width:0}
 menu-bar{height:23px;padding:0 8px 0 15px;background:linear-gradient(90deg,#f0f0f0,#fff);font:11px/16px Roboto,sans-serif;--gap:17px}
 .in{flex:1;display:flex;flex-direction:column;min-height:0;padding:0 1px;background:#efefef}
 footer{height:25px;background:#f0f0f0;display:flex;align-items:center;padding:2px 4px 0 6px;font:11px/16px "Open Sans",sans-serif;color:#777}footer b{flex:1;font-weight:normal}`,
 `<window-title>Grasshopper - unnamed</window-title><menu-bar items="File|Edit|View|Display|Solution|Help">unnamed</menu-bar>
 <div class="in"><gh-ribbon></gh-ribbon><gh-toolbar></gh-toolbar><gh-canvas></gh-canvas><footer><b>..</b><span>0.9.0076</span><svg width="16" height="14" aria-hidden="true"><path d="M13 4h2M9 8h2m2 0h2M5 12h2m2 0h2m2 0h2" stroke="#999" stroke-width="2"/></svg></footer></div>`);

/* ---------- Rhinoceros ---------- */
el('command-area',`:host{display:block;height:58px;padding:2px 2px 2px 7px;border-bottom:2px solid #c3c9d8;box-sizing:border-box}
 .h{display:flex;height:37px;background:#fff}.h p{flex:1;margin:0;padding:1px 1px 0;line-height:17px}.sb{width:15px;background:#f0f0f0;display:flex;flex-direction:column;justify-content:space-between;align-items:center;padding:4px 0}.sb ui-icon{width:9px;height:9px}
 .i{display:flex;height:17px;border-top:2px solid #b8bfcc;background:#fff}.i label{font-weight:bold;line-height:14px;padding-left:1px}.i input{flex:1;min-width:0}.sp{width:14px;border:1px solid #aaa;background:#eee;display:flex;flex-direction:column;justify-content:space-between;align-items:center;padding:1px}.sp ui-icon{width:6px;height:5px}.sp ui-icon:first-child{transform:rotate(180deg)}`,
 `<div class="h"><p>ｺﾏﾝﾄﾞ: _Undo<br>Deleteを元に戻しています。</p><div class="sb"><ui-icon name="chevu"></ui-icon><ui-icon name="chevd"></ui-icon></div></div>
 <div class="i"><label for="c">ｺﾏﾝﾄﾞ:</label><input id="c"><div class="sp"><ui-icon name="tri"></ui-icon><ui-icon name="tri"></ui-icon></div></div>`);

el('rh-tabs',`:host{display:flex;height:17px;overflow:hidden}
 button{display:flex;white-space:nowrap;line-height:15px;height:17px;flex:none}
 button::before{content:"";width:12px;margin-left:-4px;background:linear-gradient(to bottom right,#0000 47%,#a3adc4 48% 53%,#d5daea 54%)}
 button span{border-top:1px solid #a3adc4;border-bottom:1px solid #a3adc4;padding-right:8px;background:#d5daea;border-radius:0 5px 0 0;height:17px}
 button.k{font-size:13px}button.k span{padding-right:11px}
 button.on{z-index:1}button.on span{background:#fdfdfe;border-bottom-color:#fdfdfe;border-right:1px solid #a3adc4;padding-right:9px}button.on::before{margin-left:0;width:8px;background:linear-gradient(to bottom right,#0000 47%,#a3adc4 48% 53%,#fdfdfe 54%)}
 .e{flex:1;border-bottom:1px solid #a3adc4;display:flex;align-items:center;justify-content:flex-end;gap:3px;font-weight:bold}.e ui-icon{width:16px;height:16px}`,
 h=>at(h,'items').split('|').map((t,i)=>`<button class="${i?(i===5||i>7?'k':''):'on'}"><span>${t}</span></button>`).join('')+`<div class="e">»<ui-icon name="gear"></ui-icon></div>`);

el('rh-toolbars',`:host{display:block;height:101px;padding-left:7px;box-sizing:border-box}
 .r{display:flex;gap:6px}.a{flex:1;min-width:0;background:linear-gradient(#fbfbfd 30px,#dfe2ea)}.row{display:flex;align-items:center;height:32px;font-weight:bold}.row tool-strip{flex:1}.row b{width:22px;font-size:13px}
 .r1{height:57px;border-bottom:1px solid #c3c9d8;padding-top:6px}.side{width:134px;margin-right:2px;border-left:4px double #b4bccc;background:linear-gradient(#fff,#e4e7ee);display:flex;gap:6px;padding:0 5px;line-height:26px}.side tool-strip{width:54px;height:26px;--icon:21px}
 .r2{height:44px;padding-top:3px}.r2 .a{background:linear-gradient(#fff 12px,#dfe2ea)}.r2 .row{height:33px}.r2 .row b{width:28px;text-align:center}.cut{width:17px;border-left:4px double #b4bccc;overflow:hidden;display:flex;align-items:center;padding-left:3px}`,
 `<div class="r r1"><div class="a"><rh-tabs items="標準|作業平面|ﾋﾞｭｰの設定|表示|選択|ﾋﾞｭｰﾎﾟｰﾄﾚｲｱｳﾄ|表示/非表示|変形|曲線ﾂｰﾙ|ｻｰﾌｪｽﾂｰﾙ|ｿﾘｯﾄﾞﾂｰﾙ|ﾒｯｼｭﾂｰﾙ"></rh-tabs>
 <div class="row"><tool-strip icons="new open save* print prop cut copy paste undo* hand orbit zoom zwin zext zsel uview* four* car* cplane* circ* shapes* bulb* lock* layer* wheel* ball ball2* blue*"></tool-strip><b>»</b></div></div>
 <div class="side"><tool-strip icons="spiral dots"></tool-strip><span>Rebuild</span><b>»</b></div></div>
 <div class="r r2"><div class="a"><div class="row"><tool-strip icons="p1 p2 p3* ${Array.from({length:29},(_,i)=>'p'+(i+4)).join(' ')}"></tool-strip><b>»</b></div></div><div class="cut"><button aria-label="record"><ui-icon name="cut1"></ui-icon></button></div></div>`);

el('rh-palette',`:host{display:block;width:64px;flex:none;padding:1px 6px 0 0;box-sizing:border-box}.g{height:4px;border:solid #b4bccc;border-width:1px 0;margin:0 0 1px 3px}
 div.t{display:grid;grid-template:repeat(18,1fr)/28px 28px;height:497px}button{display:grid;place-items:center}ui-icon{width:20px;height:20px}`,
 `<div class="g"></div><div class="t">${Array.from({length:36},(_,i)=>{const n=i+1;return `<button aria-label="tool ${n}"><ui-icon name="a${n}"${[1,17,18,19,20,22,23,25,27,28].includes(n)?'':' flyout'}></ui-icon></button>`}).join('')}</div>`);

/* perspective camera of the model view */
const cam={c:[117.818,-130.242,153.626],t:[29.504,19.094,.668],f:1529,m:367};
const nrm=v=>{const l=Math.hypot(...v);return v.map(n=>n/l)},dt=(a,b)=>a[0]*b[0]+a[1]*b[1]+a[2]*b[2];
const cf=nrm(cam.t.map((v,i)=>v-cam.c[i])),cr=nrm([cf[1],-cf[0],0]),cu=[cr[1]*cf[2],-cr[0]*cf[2],cr[0]*cf[1]-cr[1]*cf[0]];
const prj=(x,y)=>{const p=[x-cam.c[0],y-cam.c[1],-cam.c[2]],d=dt(p,cf);return (cam.m+dt(p,cr)/d*cam.f).toFixed(1)+' '+(cam.m-dt(p,cu)/d*cam.f).toFixed(1)};
const seg=(a,b,c,d)=>`M${prj(a,b)}L${prj(c,d)}`;
const cells='452,451 600,476 646,455|600,476 580,532 502,549 433,467|580,532 672,586 727,573 724,484|727,573 788,583 844,573 875,541|844,573 947,638 1039,602|947,638 937,669 982,735 1010,740 1088,722 1182,775 1257,773|1088,722 1103,687 1039,602|1103,687 1213,666|502,549 481,576 344,557|481,576 489,632 645,625 672,586|489,632 460,664 442,667 294,607|442,667 341,743 219,684|460,664 573,758 669,687 645,625|669,687 780,707 809,680 788,583|809,680 937,669|780,707 800,760 881,782 982,735|341,743 344,795 489,805 573,758 645,804 730,809 800,760|344,795 315,823 206,852 131,772|206,852 178,893|315,823 396,927 367,977|396,927 502,895 489,805|502,895 558,915 612,901 645,804|558,915 549,1062|612,901 739,938 782,906 730,809|782,906 813,903 896,826 881,782|896,826 987,866 1057,840 1010,740|1057,840 1114,852 1182,775|1114,852 1165,908|987,866 978,917 902,939 813,903|978,917 1088,994 1106,995|1088,994 933,1049 907,1034 902,939|907,1034 765,1028 735,1010 739,938|735,1010 555,1065|765,1028 781,1165|933,1049 943,1105 1005,1143|943,1105 802,1175';
el('rh-viewport',`:host{display:grid;flex:1;min-width:0;min-height:0;background:#9da3ab;overflow:hidden}
 svg{grid-area:1/1;width:100%;height:100%;min-height:0}.l{grid-area:1/1;justify-self:start;align-self:start;display:flex;height:18px;background:#87a3c6;font:11px/18px "Open Sans",sans-serif;color:#101c38}
 .l span{padding:0 7px 0 9px;border-right:1px solid #111}.l button{width:11px;display:grid;place-items:center}.l ui-icon{width:8px;height:8px}`,
 ()=>{let a='',b='';for(let i=-100;i<=100;i++){const s=seg(i,-100,i,100)+seg(-100,i,100,i);if(i%10)a+=s;else b+=s}
 return `<svg viewBox="0 0 734 734" preserveAspectRatio="xMidYMid slice" fill="none" aria-hidden="true"><path d="${a}" stroke="#8f969e" stroke-opacity=".55"/><path d="${b}" stroke="#84868d" stroke-opacity=".85"/>
 <path d="${seg(0,50,0,100)}" stroke="#42a142" stroke-width="1.500"/><path d="${seg(60,0,100,0)}" stroke="#a04545" stroke-width="1.500"/>
 <path d="M${prj(0,0)}L${prj(60,0)}L${prj(60,50)}L${prj(0,50)}z" stroke="#a50d12" stroke-width="1.800"/>
 <g transform="matrix(.4021 0 0 .3762 110 59)" stroke="#a50d12" stroke-width="1.700">${cells.split('|').map(p=>`<polyline points="${p}" vector-effect="non-scaling-stroke"/>`).join('')}</g>
 <path d="M36 676v22l25 10M36 698l15-16" stroke="#6a6d70" stroke-width="1.200"/><g fill="#666a6e" font-family="Liberation Sans" font-size="14"><text x="39" y="679">z</text><text x="54" y="684">y</text><text x="65" y="712">x</text></g></svg>
 <div class="l"><span>Perspective</span><button aria-label="View menu"><ui-icon name="tri"></ui-icon></button></div>`});

el('view-tabs',`:host{display:flex;height:22px;font:11px/20px "Open Sans",sans-serif}button{height:21px;border:1px solid #a8b1c6;border-top:0;background:linear-gradient(to top right,#0000 6px,#a8b1c6 7px,#d5daea 8px);border-left:0;padding:0 6px 0 10px;border-radius:0 0 4px 0}
 .on{background:linear-gradient(to top right,#dfe2ea 6px,#a8b1c6 7px,#fff 8px);padding:0 6px 0 11px}.p{padding:0 8px 0 12px;color:#777;background:linear-gradient(to top right,#0000 6px,#a8b1c6 7px,#0000 8px)}`,
 `<button class="on">Perspective</button><button>Top</button><button>Front</button><button>Right</button><button class="p" aria-label="Add view">✚</button>`);

el('osnap-bar',`:host{display:flex;height:36px;align-items:flex-start;padding:6px 0 0 7px;box-sizing:border-box}.g{width:4px;height:28px;border:solid #b4bccc;border-width:0 1px;margin:-1px 3px 0 -3px}
 label{display:flex;gap:5px;margin-right:6px;line-height:16px;white-space:nowrap}input{appearance:none;width:13px;height:13px;border:1px solid #444;background:#fff;margin-top:2px;display:grid;place-items:center}
 input:checked::after{content:"";width:9px;height:5px;border:solid #333;border-width:0 0 1px 1px;transform:rotate(-45deg) translate(1px,-1px)}
 .mix{border-color:#1c72c4;background:#888;box-shadow:inset 0 0 0 1px #fff}input:disabled{border-color:#bbb;background:#ddd}`,
 `<i class="g"></i>`+'+端点|+近接点|+点|+中点|+中心点|+交点|垂直点|+接点|+四半円点|ﾉｯﾄ|頂点|投影|無効'.split('|').map(t=>`<label><input type="checkbox"${t[0]==='+'?' checked':''}${t==='投影'?' class="mix"':''}${t==='無効'?' disabled':''}>${t.replace('+','')}</label>`).join(''));

el('status-bar',`:host{display:grid;box-sizing:border-box;grid-template-columns:59px 69px 69px 69px 69px 1fr 73px 57px 58px 42px 58px 56px 74px 37px 20px;height:21px;border-top:1px solid #a8b1c6;border-bottom:1px solid #444;line-height:18px;padding-right:2px}
 button{border-right:1px solid #a8b1c6;overflow:hidden;white-space:nowrap;text-align:center}.on{background:#e4f1fb;font-weight:bold}.d{display:flex;align-items:center;padding-left:3px;gap:1px}.d i{width:14px;height:14px;background:#000}`,
 `<button>作業平面</button><button>x -3.129</button><button>y -26.241</button><button>z 0.000</button><button>ﾐﾘﾒｰﾄﾙ</button><button class="d"><i></i>ﾃﾞﾌｫﾙﾄ</button><button class="on">ｸﾞﾘｯﾄﾞｽﾅｯﾌﾟ</button><button>直交ﾓｰﾄﾞ</button><button>平面ﾓｰﾄﾞ</button><button class="on">Osnap</button><button class="on">ｽﾏｰﾄﾄﾗｯ</button><button class="on">ｶﾞﾑﾎﾞｰﾙ</button><button>ﾋｽﾄﾘを記録</button><button>ﾌｨﾙﾀ</button><span></span>`);

const panelTabs=`.tabs{display:flex;height:20px;border-bottom:1px solid #a8b1c6;align-items:flex-end}.tabs button{display:flex;align-items:center;gap:3px;height:20px;background:#d5daea;border-top:1px solid #a8b1c6;border-left:1px solid #a8b1c6;border-radius:4px 0 0 0;padding-left:4px;margin-bottom:-1px}
 .tabs button::after{content:"";width:15px;height:19px;background:linear-gradient(to bottom left,#dfe2ea 47%,#a8b1c6 48% 52%,#d5daea 53%)}.tabs .on{background:#fafafc}.tabs .on::after{background:linear-gradient(to bottom left,#dfe2ea 47%,#a8b1c6 48% 52%,#fafafc 53%)}.tabs ui-icon{width:15px;height:15px}.tabs .gear{margin-left:auto;margin-bottom:1px}
 .g{height:4px;border:solid #b4bccc;border-width:1px 0;margin-bottom:4px}`;
el('layer-panel',`:host{display:flex;flex-direction:column;flex:1;min-height:0;padding-top:1px}${panelTabs}
 .b{flex:1;display:flex;flex-direction:column;border:1px solid #a8b1c6;border-top:0;background:#fff;min-height:0}.cl{overflow:hidden;background:#fafafc;border-bottom:1px solid #b4bccc}tool-strip{height:18px;margin-right:-9px;--icon:15px}
 table{border-collapse:collapse;margin:4px 1px 0;width:calc(100% - 2px)}th{font-weight:normal;text-align:left;height:16px;padding:0 4px;line-height:16px}td{border-bottom:1px dotted #ddd;height:16px;padding:0 8px;line-height:15px}tbody tr:first-child td{font-weight:bold;height:19px;vertical-align:bottom}
 .sp{flex:1}.sb{height:15px;background:#f0f0f0;display:flex;align-items:center;padding:0 4px}.sb ui-icon{width:9px;height:9px}.sb i{height:15px;width:26px;background:#cdcdcd;margin-left:4px;margin-right:auto}`,
 `<div class="g"></div><div class="tabs"><button class="on" aria-label="Layers"><ui-icon name="layer"></ui-icon></button><button aria-label="Display"><ui-icon name="mon"></ui-icon></button><button aria-label="Help"><ui-icon name="help"></ui-icon></button><ui-icon class="gear" name="gear"></ui-icon></div>
 <div class="b"><div class="cl"><tool-strip icons="new dup del up down left"></tool-strip></div><table><thead><tr><th>名前</th></tr></thead><tbody>${['ﾃﾞﾌｫﾙﾄ','ﾚｲﾔ 01','ﾚｲﾔ 02','ﾚｲﾔ 03','ﾚｲﾔ 04','ﾚｲﾔ 05'].map(t=>`<tr><td>${t}</td></tr>`).join('')}</tbody></table><div class="sp"></div><div class="sb"><ui-icon name="chevl"></ui-icon><i></i><ui-icon name="chevr"></ui-icon></div></div>`);

const props=[['ﾋﾞｭｰﾎﾟｰﾄ'],['ﾀｲﾄﾙ','Perspective'],['幅','744','d'],['高さ','745','d'],['投影','ﾊﾟｰｽ','s'],['ｶﾒﾗ'],['ﾚﾝｽﾞ長','50.0'],['回転','0.0'],['X位置','117.818'],['Y位置','-130.242'],['Z位置','153.626'],['位置','配置...','b'],['ﾀｰｹﾞｯﾄ'],['Xﾀｰｹﾞ...','29.504'],['Yﾀｰｹﾞ...','19.094'],['Zﾀｰｹﾞ...','0.668'],['位置','配置...','b'],['壁紙']];
el('property-panel',`:host{display:block;padding-top:3px}${panelTabs}
 .b{display:flex;border:1px solid #a8b1c6;border-top:0;background:#fafafc;padding:8px 3px 0 4px;height:344px}
 table{border-collapse:collapse;table-layout:fixed;width:109px}td,th{padding:0;height:18px;line-height:16px;border:1px solid #dfe2ea;white-space:nowrap;overflow:hidden;font-weight:normal;text-align:left}.h th{height:20px;background:#f7f7f9;padding-left:2px}
 .k{width:55px}th.n{padding-left:11px;background:linear-gradient(90deg,#f5f5f8 11px,#fff 11px)}td{background:#fff}td input{width:100%;height:16px;padding:0 0 0 3px;text-overflow:ellipsis;font-size:11px;display:block}.d,.d th.n{color:#888}.d td{background:#dfe2ea;padding-left:3px;font-size:11px}
 td button{width:100%;height:16px;line-height:14px;background:#e2e2e2;border:1px solid #999;display:block}.s{display:flex;height:16px}.s select{appearance:none;flex:1;min-width:0;padding-left:3px;height:16px}.s ui-icon{width:16px;height:16px;border:1px solid #aaa;background:#eee;padding:3px}
 .sb{width:15px;margin-left:auto;background:#f0f0f0;display:flex;flex-direction:column;align-items:center;padding:4px 0}.sb ui-icon{width:9px;height:9px}.sb i{width:15px;height:259px;background:#cdcdcd;margin:3px 0 auto}`,
 `<div class="g"></div><div class="tabs"><button class="on"><ui-icon name="wheel"></ui-icon>ﾌﾟﾛﾊﾟﾃｨ</button><ui-icon class="gear" name="gear"></ui-icon></div>
 <div class="b"><table><colgroup><col class="k"><col></colgroup><tbody>${props.map(([a,b,k],i)=>b===undefined?`<tr class="h"><th colspan="2">${a}</th></tr>`:`<tr class="${k==='d'?'d':''}"><th class="n"><label for="v${i}">${a}</label></th><td>${k==='d'?`<output id="v${i}">${b}</output>`:k==='s'?`<div class="s"><select id="v${i}"><option>${b}</option></select><ui-icon name="chev"></ui-icon></div>`:k==='b'?`<button id="v${i}">${b}</button>`:`<input id="v${i}" value="${b}">`}</td></tr>`).join('')}</tbody></table>
 <div class="sb"><ui-icon name="chevu"></ui-icon><i></i><ui-icon name="chevd"></ui-icon></div></div>`);

el('rh-window',`:host{display:flex;flex-direction:column;background:linear-gradient(90deg,#0003,#0000 12px),#dfe2ea;border:solid #3a3a3f;border-width:1px 1px 0 1px;min-width:0}
 .top{background:linear-gradient(90deg,#0003,#0000 12px),#fff;height:50px}window-title{color:#999}menu-bar{height:20px;padding:0 0 0 7px;color:#777;--gap:12px}
 .m{flex:1;display:flex;min-height:0}.v{flex:1;display:flex;flex-direction:column;min-width:0}.p{width:137px;margin-left:8px;display:flex;flex-direction:column;flex:none;margin-bottom:4px}.v,.p{min-height:0}`,
 `<div class="top"><window-title icon="rhino">無題 - Rhinoceros 5.0 Commercial - [Perspective]</window-title><menu-bar items="ﾌｧｲﾙ(F)|編集(E)|ﾋﾞｭｰ(V)|曲線(C)|ｻｰﾌｪｽ(S)|ｿﾘｯﾄﾞ(O)|ﾒｯｼｭ(M)|寸法(D)|変形(T)|ﾂｰﾙ(L)|解析(A)|ﾚﾝﾀﾞﾘﾝｸﾞ(R)|ﾊﾟﾈﾙ(P)|T-Splines|Flamingo nXt 5.0|ﾍﾙﾌﾟ(H)"></menu-bar></div>
 <command-area></command-area><rh-toolbars></rh-toolbars>
 <div class="m"><rh-palette></rh-palette><div class="v"><rh-viewport></rh-viewport><view-tabs></view-tabs></div><div class="p"><layer-panel></layer-panel><property-panel></property-panel></div></div>
 <osnap-bar></osnap-bar><status-bar></status-bar>`);

el('work-desk',`:host{display:grid;grid-template-columns:1fr 1fr;height:100vh}`,`<gh-window></gh-window><rh-window></rh-window>`);
</script>
</body>
</html>
